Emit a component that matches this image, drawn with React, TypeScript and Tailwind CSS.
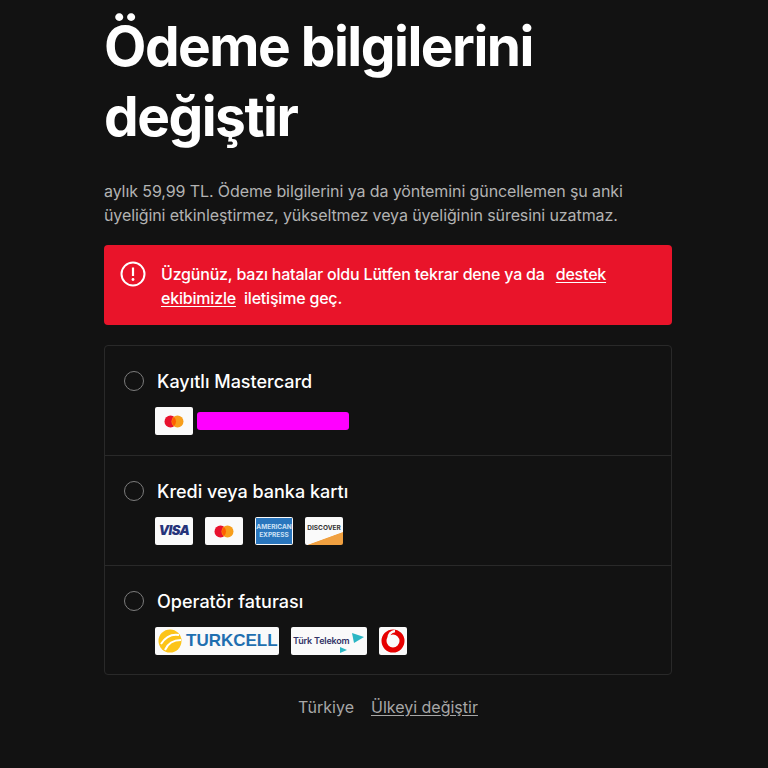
import React from 'react';

const Badge: React.FC<{ w?: string; children: React.ReactNode }> = ({ w = 'w-[38px]', children }) => (
  <div className={`${w} h-[28px] bg-[#fafafa] rounded-[2px] flex items-center justify-center overflow-hidden shrink-0`}>{children}</div>
);

const MasterLogo = () => (
  <svg width="20" height="13" viewBox="0 0 20 13">
    <circle cx="6.5" cy="6.5" r="6" fill="#e8112d" />
    <circle cx="13.5" cy="6.5" r="6" fill="#f79e1b" />
    <path d="M10 2a6 6 0 0 1 0 9a6 6 0 0 1 0-9z" fill="#ff5f00" />
  </svg>
);

const Row: React.FC<{ label: string; last?: boolean; children: React.ReactNode }> = ({ label, last, children }) => (
  <div className={`pl-[19px] pt-[25px] ${last ? 'h-[108px]' : 'h-[110px] border-b border-[#292929]'}`}>
    <div className="flex items-center gap-[13px] h-[20px]">
      <div className="w-5 h-5 rounded-full border border-[#7c7c7c] shrink-0"></div>
      <span className="text-[18px] font-medium text-white">{label}</span>
    </div>
    <div className="flex items-center gap-3 ml-[31px] mt-[16px]">{children}</div>
  </div>
);

export default function App() {
  return (
    <div className="w-[768px] h-[768px] overflow-hidden bg-[#121212] font-['Inter',sans-serif]">
      <div className="w-[568px] ml-[104px]">
        <h1 className="pt-[11px] text-[55px] leading-[70px] font-bold tracking-[-1.5px] text-white">
          Ödeme bilgilerini değiştir
        </h1>
        <p className="mt-[28px] text-[16px] leading-[24px] tracking-[-0.1px] text-[#b3b3b3]">
          aylık 59,99 TL. Ödeme bilgilerini ya da yöntemini güncellemen şu anki üyeliğini etkinleştirmez, yükseltmez veya üyeliğinin süresini uzatmaz.
        </p>
        <div className="mt-[18px] h-[80px] bg-[#e9142a] rounded-[4px] flex gap-[15px] pl-[16px] pt-[16px]">
          <svg width="26" height="26" viewBox="0 0 26 26" className="shrink-0" fill="none">
            <circle cx="13" cy="13" r="11.5" stroke="white" strokeWidth="2" />
            <path d="M13 6.5v8.5" stroke="white" strokeWidth="2.2" />
            <circle cx="13" cy="18.5" r="1.4" fill="white" />
          </svg>
          <p className="pt-[1px] text-[16px] leading-[24px] tracking-[-0.2px] font-medium text-white w-[480px]">
            Üzgünüz, bazı hatalar oldu Lütfen tekrar dene ya da <a className="underline underline-offset-2 ml-[7px]">destek</a> <a className="underline underline-offset-2">ekibimizle</a> <span className="ml-1">iletişime geç.</span>
          </p>
        </div>
        <div className="mt-[20px] border border-[#292929] rounded-[4px]">
          <Row label="Kayıtlı Mastercard">
            <Badge><MasterLogo /></Badge>
            <div className="w-[152px] h-[18px] bg-[#ff00ff] rounded-[3px] -ml-2"></div>
          </Row>
          <Row label="Kredi veya banka kartı">
            <Badge><span className="text-[13px] font-black italic tracking-[-0.5px] text-[#26337a]">VISA</span></Badge>
            <Badge><MasterLogo /></Badge>
            <Badge>
              <div className="w-[36px] h-[26px] bg-[#2a76bd] flex flex-col items-center justify-center text-[6.5px] leading-[8px] font-bold text-[#cfe2f5]">
                <span>AMERICAN</span>
                <span>EXPRESS</span>
              </div>
            </Badge>
            <Badge>
              <div className="w-full h-full flex justify-center pt-[7px] bg-[linear-gradient(160deg,#fafafa_68%,#f0a040_70%)]">
                <span className="text-[6.5px] leading-[8px] font-bold text-[#333333]">DISCOVER</span>
              </div>
            </Badge>
          </Row>
          <Row label="Operatör faturası" last>
            <Badge w="w-[124px]">
              <div className="flex items-center gap-[4px] pl-[3px] w-full">
                <svg width="24" height="24" viewBox="0 0 24 24" className="shrink-0">
                  <circle cx="12" cy="12" r="11.5" fill="#fcc419" />
                  <path d="M3 15C8 7 15 5 21 6M7 21C10 14 15 11 23 11" stroke="white" strokeWidth="2" fill="none" />
                </svg>
                <span className="font-['Liberation_Sans',sans-serif] text-[17px] font-bold text-[#1f6fb0]">TURKCELL</span>
              </div>
            </Badge>
            <Badge w="w-[76px]">
              <div className="relative w-full h-full flex items-center pl-[2px]">
                <span className="text-[9px] font-semibold tracking-[-0.2px] text-[#333366]">Türk Telekom</span>
                <svg width="76" height="28" viewBox="0 0 76 28" className="absolute left-0 top-0">
                  <path d="M61 6l12 4-10 6z" fill="#2bb6c4" />
                  <path d="M49 20l7 3-7 3z" fill="#2bb6c4" />
                </svg>
              </div>
            </Badge>
            <Badge w="w-[28px]">
              <svg width="24" height="24" viewBox="0 0 24 24">
                <circle cx="12" cy="12" r="9" fill="none" stroke="#e60000" strokeWidth="5" />
                <path d="M14 2c-4 .5-6.5 3.5-6.5 7.5 0 2.5 2 4 4 4" fill="none" stroke="#fafafa" strokeWidth="2.5" />
              </svg>
            </Badge>
          </Row>
        </div>
        <div className="mt-[21px] flex justify-center gap-[17px] text-[16px] leading-[22px] text-[#a7a7a7]">
          <span>Türkiye</span>
          <a className="underline underline-offset-2">Ülkeyi değiştir</a>
        </div>
      </div>
    </div>
  );
}
